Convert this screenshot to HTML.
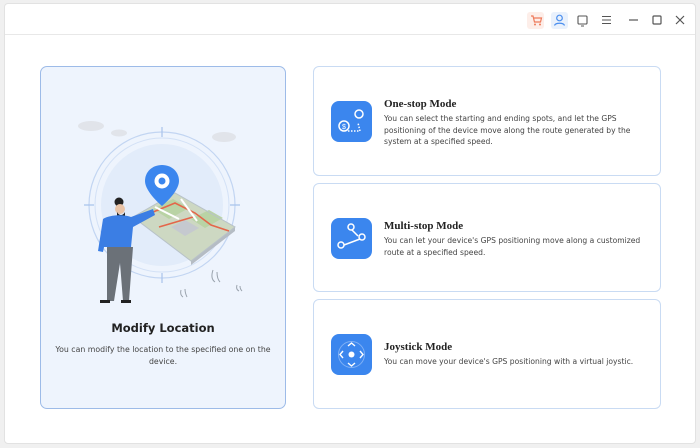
<!DOCTYPE html>
<html><head><meta charset="utf-8"><style>
*{margin:0;padding:0;box-sizing:border-box}
body{width:700px;height:448px;background:#f0f0f0;font-family:"DejaVu Sans","Liberation Sans",sans-serif;position:relative;overflow:hidden}
.win{position:absolute;left:4px;top:3px;width:692px;height:441px;background:#fff;border:1px solid #e2e2e2;border-radius:4px}
.hdr{position:absolute;left:0;top:0;right:0;height:31px;border-bottom:1px solid #e8e8e8}
.left{position:absolute;left:40px;top:66px;width:246px;height:343px;background:#eef4fd;border:1.5px solid #9dbbe8;border-radius:7px}
.card{position:absolute;left:313px;width:348px;background:#fff;border:1.5px solid #c9dbf3;border-radius:6px}
.ic{position:absolute;left:17px;width:41px;height:41px;background:#3b86ee;border-radius:8px}
.t{position:absolute;left:70px;font-family:"Liberation Serif",serif;font-weight:bold;font-size:11px;color:#222}
.d{position:absolute;left:70px;font-size:7.6px;line-height:11.5px;color:#444;width:262px}
.lt{position:absolute;left:0;width:100%;text-align:center;top:254px;font-weight:bold;font-size:11.5px;color:#222}
.ld{position:absolute;left:10px;right:10px;text-align:center;top:277px;font-size:7.8px;line-height:11.5px;color:#444}
</style></head><body>
<div class="win"><div class="hdr">
<svg width="692" height="31" style="position:absolute;left:0;top:0">
<rect x="522" y="8" width="17" height="17" rx="3" fill="#fdeee9"/>
<path d="M526 12h2l1.5 6h6l1-4h-8" fill="none" stroke="#ee7a5a" stroke-width="1.2"/><circle cx="530" cy="20.5" r="1" fill="#ee7a5a"/><circle cx="535" cy="20.5" r="1" fill="#ee7a5a"/>
<rect x="546" y="8" width="17" height="17" rx="3" fill="#e9f1fc"/>
<circle cx="554.5" cy="14" r="2.8" fill="none" stroke="#4a8eee" stroke-width="1.2"/><path d="M549.5 21.5c1-3 9-3 10 0" fill="none" stroke="#4a8eee" stroke-width="1.2"/>
<rect x="573" y="12" width="9" height="8" rx="1" fill="none" stroke="#555" stroke-width="1.1"/><path d="M576 22h3" stroke="#555"/>
<path d="M597 12.5h9M597 16h9M597 19.5h9" stroke="#555" stroke-width="1.1"/>
<path d="M624 16h9" stroke="#555" stroke-width="1.2"/>
<rect x="648" y="12" width="8" height="8" rx="1" fill="none" stroke="#555" stroke-width="1.2"/>
<path d="M671 12l8 8M679 12l-8 8" stroke="#555" stroke-width="1.2"/>
</svg></div></div>

<div class="left">
<svg width="246" height="250" style="position:absolute;left:0;top:0">
<g fill="#e1e4ea"><ellipse cx="50" cy="59" rx="13" ry="5"/><ellipse cx="78" cy="66" rx="8" ry="3.5"/><ellipse cx="183" cy="70" rx="12" ry="5"/></g>
<circle cx="121" cy="138" r="61" fill="#e2ecfa"/>
<circle cx="121" cy="138" r="73" fill="none" stroke="#c2d5f2" stroke-width="1.2"/>
<circle cx="121" cy="138" r="67" fill="none" stroke="#d3e1f6" stroke-width="1"/>
<g stroke="#a9c3ec" stroke-width="1.2"><path d="M121 60v10M121 206v10M43 138h10M189 138h10"/></g>
<path d="M92 150l42-24 60 34-44 34z" fill="#cdd8c2"/>
<path d="M150 194l44-34v4l-44 34z" fill="#b5bcc4"/>
<path d="M112 142l20-10 16 9-20 11zM150 152l18-9 14 8-18 10z" fill="#b9d3a5"/>
<path d="M130 160l14-7 14 8-14 8z" fill="#c5c9cf"/>
<path d="M92 150l42-24 60 34-44 34z" fill="none" stroke="#b8c2c8"/>
<path d="M100 150l34-14 20 10 16 12 18 6M118 160l34-10" fill="none" stroke="#e4664a" stroke-width="1.6"/>
<path d="M114 140l24 12M140 132l16 22" stroke="#fff" stroke-width="2"/>
<path d="M121 98c-10 0-17 7-17 16 0 11 17 25 17 25s17-14 17-25c0-9-7-16-17-16z" fill="#3b86ee"/>
<circle cx="121" cy="114" r="7.5" fill="#fff"/><circle cx="121" cy="114" r="3.5" fill="#3b86ee"/>
<circle cx="78" cy="135" r="4.5" fill="#222"/><circle cx="79" cy="142" r="5" fill="#e9c3a6"/>
<path d="M76 145c2 4 6 4 8 0v4c-2 3-6 3-8 0z" fill="#222"/>
<path d="M62 152c6-4 20-5 28-2l22-8 2 6-22 12-2 20h-28z" fill="#3b7ee4"/>
<path d="M62 152l-5 32 5 1 5-25z" fill="#3b7ee4"/>
<path d="M66 180h26l-4 54h-6l-3-38-6 38h-7z" fill="#6b7178"/>
<path d="M59 233h10v3h-10zM80 233h10v3h-10z" fill="#222"/>
<g fill="none" stroke="#9aa3ad" stroke-width="1"><path d="M172 203c-2 6-1 10 2 12M176 205c0 5 1 8 3 10M140 223c-1 3 0 6 2 7M144 222c0 3 1 6 2 8M196 218c-1 3 0 5 2 6M199 219c0 2 1 4 2 5"/></g>
</svg>
<div class="lt">Modify Location</div>
<div class="ld">You can modify the location to the specified one on the device.</div>
</div>

<div class="card" style="top:66px;height:110px">
<div class="ic" style="top:34px"><svg width="41" height="41"><g fill="none" stroke="#fff" stroke-width="1.5"><circle cx="13" cy="25" r="5"/><circle cx="28" cy="13" r="4"/><path d="M17 30h12l-2-8" stroke-dasharray="1.5 1.5"/></g><text x="13" y="28" font-size="7" fill="#fff" text-anchor="middle" font-family="Liberation Sans">$</text></svg></div>
<div class="t" style="top:31px">One-stop Mode</div>
<div class="d" style="top:46px">You can select the starting and ending spots, and let the GPS positioning of the device move along the route generated by the system at a specified speed.</div>
</div>
<div class="card" style="top:183px;height:109px">
<div class="ic" style="top:34px"><svg width="41" height="41"><g fill="none" stroke="#fff" stroke-width="1.5"><circle cx="20" cy="9" r="3"/><circle cx="31" cy="19" r="3"/><circle cx="10" cy="27" r="3"/><path d="M21 12l6 6M13 27l16-6"/></g></svg></div>
<div class="t" style="top:36px">Multi-stop Mode</div>
<div class="d" style="top:51px">You can let your device's GPS positioning move along a customized route at a specified speed.</div>
</div>
<div class="card" style="top:299px;height:110px">
<div class="ic" style="top:34px"><svg width="41" height="41"><circle cx="20.5" cy="20.5" r="13" fill="none" stroke="#7fb0f5" stroke-width="1"/><circle cx="20.5" cy="20.5" r="3" fill="#fff"/><g fill="none" stroke="#fff" stroke-width="1.4"><path d="M17 12l3.5-3 3.5 3M17 29l3.5 3 3.5-3M12 17l-3 3.5 3 3.5M29 17l3 3.5-3 3.5"/></g></svg></div>
<div class="t" style="top:41px">Joystick Mode</div>
<div class="d" style="top:56px">You can move your device's GPS positioning with a virtual joystic.</div>
</div>
</body></html>
